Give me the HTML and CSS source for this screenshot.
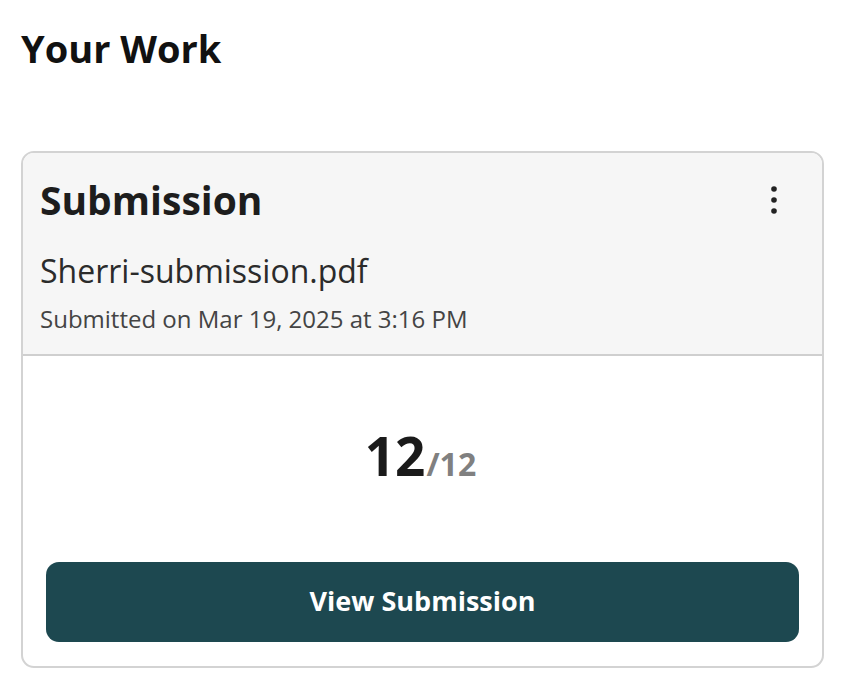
FILE: index.html
```html
<!DOCTYPE html>
<html>
<head>
<meta charset="utf-8">
<link rel="stylesheet" href="styles.css">
</head>
<body>
<main class="page">
  <h1 class="title">Your Work</h1>
  <section class="card">
    <div class="card-head">
      <div class="head-row">
        <h2 class="card-title">Submission</h2>
        <button class="kebab" aria-label="More options">
          <svg width="6" height="28" viewBox="0 0 6 28"><circle cx="3" cy="3" r="2.8" fill="#222"/><circle cx="3" cy="14" r="2.8" fill="#222"/><circle cx="3" cy="25" r="2.8" fill="#222"/></svg>
        </button>
      </div>
      <div class="file-name">Sherri-submission.pdf</div>
      <div class="file-date">Submitted on Mar 19, 2025 at 3:16 PM</div>
    </div>
    <div class="card-body">
      <div class="score"><span class="score-main">12</span><span class="score-total">/12</span></div>
      <button class="view-btn">View Submission</button>
    </div>
  </section>
</main>
</body>
</html>
```
FILE: styles.css
```css
* { box-sizing: border-box; }
html, body { margin: 0; padding: 0; background: #fff; }
body { font-family: "Open Sans", "Noto Sans", sans-serif; color: #1a1a1a; }
.page { padding: 23px 30px 0 21px; width: 854px; }
.title { margin: 0; font-size: 38px; font-weight: 700; line-height: 50px; color: #111; }
.card {
  margin-top: 78px;
  width: 803px;
  border: 2px solid #d3d3d3;
  border-radius: 13px;
  overflow: hidden;
}
.card-head {
  background: #f6f6f6;
  border-bottom: 2px solid #cfcfcf;
  padding: 21px 18px 0 17px;
  height: 203px;
}
.head-row { display: flex; justify-content: space-between; align-items: center; }
.card-title { margin: 0; font-size: 39px; font-weight: 700; line-height: 52px; color: #1d1d1d; }
.kebab { background: none; border: none; padding: 0; margin-right: 27px; display: flex; }
.file-name { margin-top: 25px; font-size: 32px; line-height: 40px; color: #2b2b2b; }
.file-date { margin-top: 13px; font-size: 24px; line-height: 30px; color: #444; }
.card-body { padding: 0 23px 24px 23px; display: flex; flex-direction: column; align-items: center; }
.score { margin-top: 68px; margin-right: 4px; display: flex; align-items: baseline; }
.score-main { font-size: 53px; font-weight: 700; line-height: 64px; color: #1a1a1a; }
.score-total { font-size: 32px; font-weight: 700; color: #808080; margin-left: 1px; }
.view-btn {
  margin-top: 74px;
  width: 100%;
  height: 80px;
  padding: 0 0 3px 0;
  border: none;
  border-radius: 13px;
  background: #1d4850;
  color: #fff;
  font-family: "Open Sans", "Noto Sans", sans-serif;
  font-size: 27px;
  font-weight: 700;
}
```
